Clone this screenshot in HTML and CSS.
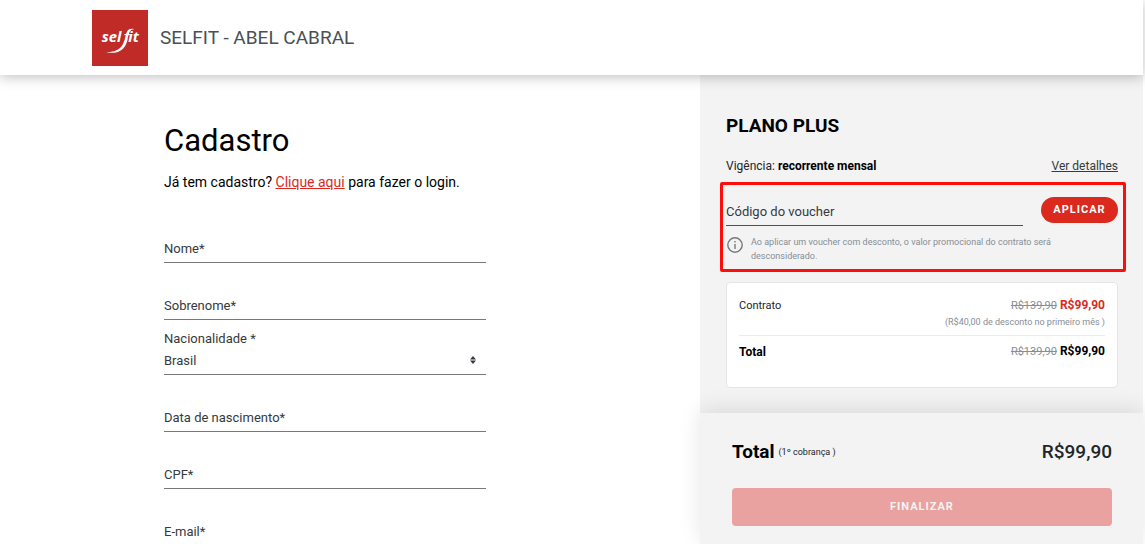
FILE: index.html
```html
<!DOCTYPE html>
<html lang="pt-BR">
<head>
    <meta charset="UTF-8">
    <meta name="viewport" content="width=device-width, initial-scale=1.0">
    <title>Cadastro - Selfit Abel Cabral</title>
    <link rel="stylesheet" href="styles.css">
</head>
<body>
    <header class="header">
        <svg class="logo" viewBox="0 0 57 57" role="img" aria-label="Selfit">
            <rect width="57" height="57" fill="#c02b28"/>
            <text x="10" y="33" class="logo-text">sel</text>
            <text x="37" y="33" class="logo-text">it</text>
            <!-- long f with the swash -->
            <path d="M43 19.500 C37 18 35.500 21 34 27 C32 37 28 43 14 43 C25 45 33 42 36 31 C37.500 23 38 20 43 19.500 Z" fill="#fff"/>
            <path d="M33 25 H38.500" stroke="#fff" stroke-width="1.200"/>
        </svg>
        <span class="unit-name">SELFIT - ABEL CABRAL</span>
    </header>

    <main class="content">
        <!-- Registration form -->
        <section class="register">
            <h1>Cadastro</h1>
            <p class="login-text">Já tem cadastro? <a href="#">Clique aqui</a> para fazer o login.</p>

            <form>
                <div class="field">
                    <input type="text" id="nome" required>
                    <label for="nome">Nome*</label>
                </div>
                <div class="field">
                    <input type="text" id="sobrenome" required>
                    <label for="sobrenome">Sobrenome*</label>
                </div>
                <div class="field-select">
                    <label for="nacionalidade">Nacionalidade *</label>
                    <div class="select-row">
                        <select id="nacionalidade">
                            <option>Brasil</option>
                        </select>
                        <svg class="arrows" viewBox="0 0 6 8"><path d="M3 0 L6 3.500 H0 Z M0 4.500 H6 L3 8 Z" fill="#343a40"/></svg>
                    </div>
                </div>
                <div class="field">
                    <input type="text" id="nascimento" required>
                    <label for="nascimento">Data de nascimento*</label>
                </div>
                <div class="field">
                    <input type="text" id="cpf" required>
                    <label for="cpf">CPF*</label>
                </div>
                <div class="field">
                    <input type="email" id="email" required>
                    <label for="email">E-mail*</label>
                </div>
            </form>
        </section>

        <!-- Plan summary -->
        <aside class="sidebar">
            <div class="plan">
                <h2>PLANO PLUS</h2>
                <div class="row term">
                    <span>Vigência: <b>recorrente mensal</b></span>
                    <a href="#">Ver detalhes</a>
                </div>

                <div class="voucher">
                    <div class="voucher-row">
                        <div class="voucher-field">
                            <input type="text" id="voucher" required>
                            <label for="voucher">Código do voucher</label>
                        </div>
                        <button type="button" class="apply">APLICAR</button>
                    </div>
                    <div class="voucher-info">
                        <svg class="info-icon" viewBox="0 0 16 16">
                            <circle cx="8" cy="8" r="7.200" fill="none" stroke="#76797c" stroke-width="1.400"/>
                            <path d="M8 7 V12 M8 4 V5.500" stroke="#76797c" stroke-width="1.400"/>
                        </svg>
                        <p>Ao aplicar um voucher com desconto, o valor promocional do contrato será desconsiderado.</p>
                    </div>
                </div>

                <div class="prices">
                    <div class="row contract">
                        <span class="item">Contrato</span>
                        <span><s>R$139,90</s> <b class="red">R$99,90</b></span>
                    </div>
                    <p class="discount">(R$40,00 de desconto no primeiro mês )</p>
                    <div class="row sum">
                        <b>Total</b>
                        <span><s>R$139,90</s> <b>R$99,90</b></span>
                    </div>
                </div>
            </div>

            <div class="checkout">
                <div class="row amount">
                    <span><b>Total</b> <small>(1º cobrança )</small></span>
                    <span class="value">R$99,90</span>
                </div>
                <button type="submit" class="finish" disabled>FINALIZAR</button>
            </div>
        </aside>
    </main>
</body>
</html>
```
FILE: styles.css
```css
* {
    box-sizing: border-box;
}

body {
    display: flex;
    flex-direction: column;
    height: 100vh;
    margin: 0;
    padding-right: 2px;
    overflow: hidden;
    font-family: Roboto, Arial, sans-serif;
    font-size: 12px;
    line-height: 16px;
    color: #212529;
    background-color: #fff;
}

h1, h2, p {
    margin: 0;
}

b {
    font-weight: 700;
    color: #000;
}

/* Header */
.header {
    display: flex;
    align-items: center;
    gap: 12px;
    flex: none;
    height: 75px;
    padding-left: 92px;
    background-color: #fff;
    box-shadow: 0 2px 12px rgba(0, 0, 0, 0.25);
    position: relative;
    z-index: 2;
}

.logo {
    width: 56px;
    height: 56px;
}

.logo-text {
    font-family: "Open Sans", sans-serif;
    font-size: 15px;
    font-weight: 700;
    font-style: italic;
    fill: #fff;
}

.unit-name {
    font-size: 19px;
    color: #495057;
}

.content {
    display: grid;
    grid-template-columns: 1fr 443px;
    flex: 1;
    min-height: 0;
}

/* Registration form */
.register {
    padding: 46px 0 0 164px;
    overflow: hidden;
    color: #000;
}

h1 {
    font-size: 31px;
    font-weight: 400;
    line-height: 40px;
}

.login-text {
    margin-top: 11px;
    font-size: 14px;
    line-height: 20px;
}

.login-text a {
    color: #dc291e;
}

form {
    width: 322px;
    margin-top: 14px;
}

.field {
    position: relative;
    height: 57px;
    padding-top: 24px;
    font-size: 13px;
    color: #343a40;
}

input, select {
    display: block;
    width: 100%;
    padding: 0;
    border: none;
    border-bottom: 1px solid #76797c;
    border-radius: 0;
    outline: none;
    background: transparent;
    font: inherit;
    color: #343a40;
}

.field input {
    height: 33px;
}

/* labels rest over the empty inputs */
.field label {
    position: absolute;
    left: 0;
    bottom: 6px;
}

.field input:focus + label,
.field input:valid + label {
    bottom: 30px;
}

.field-select {
    padding-top: 11px;
    font-size: 13px;
    color: #343a40;
}

.field-select label {
    display: block;
}

.select-row {
    position: relative;
}

select {
    height: 28px;
    appearance: none;
}

.arrows {
    position: absolute;
    top: 9px;
    right: 10px;
    width: 6px;
    height: 8px;
    pointer-events: none;
}

/* Plan summary */
.sidebar {
    display: flex;
    flex-direction: column;
    background-color: #f3f3f3;
}

.plan {
    flex: 1;
    padding: 39px 25px 0 26px;
}

h2 {
    font-size: 19px;
    font-weight: 700;
    line-height: 24px;
    color: #000;
}

.row {
    display: flex;
    justify-content: space-between;
    align-items: center;
}

.term {
    margin-top: 20px;
}

.term a {
    color: #343a40;
}

.voucher {
    margin: 8px -8px 0 -6px;
    padding: 12px 5px 6px 3px;
    border: 3px solid #fe0d0d;
    border-radius: 2px;
}

.voucher-row {
    display: flex;
    justify-content: space-between;
    align-items: flex-start;
}

.voucher-field {
    position: relative;
    width: 297px;
    font-size: 13px;
}

.voucher-field input {
    height: 29px;
    border-color: #495057;
}

.voucher-field label {
    position: absolute;
    left: 0;
    bottom: 6px;
    color: #343a40;
}

.apply {
    width: 77px;
    height: 26px;
    padding: 0;
    border: none;
    border-radius: 13px;
    background-color: #dc291e;
    color: #fff;
    font: 700 11px/16px Roboto, Arial, sans-serif;
    letter-spacing: 1px;
    cursor: pointer;
}

.voucher-info {
    display: flex;
    gap: 8px;
    margin-top: 9px;
    padding: 0 40px 0 1px;
    font-size: 9px;
    line-height: 14px;
    color: #868e96;
}

.info-icon {
    flex: none;
    width: 16px;
    height: 16px;
    margin-top: 2px;
}

.prices {
    height: 106px;
    margin-top: 10px;
    padding: 14px 12px;
    border: 1px solid #e5e5e5;
    border-radius: 4px;
    background-color: #fff;
}

.item,
.prices s {
    font-size: 11px;
}

.prices s {
    color: #868e96;
}

.prices .red {
    color: #dc291e;
}

.discount {
    padding-bottom: 5px;
    border-bottom: 1px solid #ebebeb;
    font-size: 9px;
    text-align: right;
    color: #868e96;
}

.sum {
    margin-top: 7px;
}

/* Fixed total at the bottom */
.checkout {
    height: 131px;
    padding: 27px 31px 0 32px;
    background-color: #f3f3f3;
    box-shadow: 0 -4px 20px rgba(0, 0, 0, 0.1);
}

.amount {
    line-height: 24px;
}

.amount > span {
    display: flex;
    align-items: center;
    gap: 4px;
}

.amount b,
.value {
    font-size: 19px;
}

.amount small {
    font-size: 9px;
}

.value {
    font-weight: 500;
}

.finish {
    width: 100%;
    height: 38px;
    margin-top: 24px;
    border: none;
    border-radius: 4px;
    background-color: #e9a29f;
    color: #f3f3f3;
    font: 700 11px/16px Roboto, Arial, sans-serif;
    letter-spacing: 1px;
}
```
